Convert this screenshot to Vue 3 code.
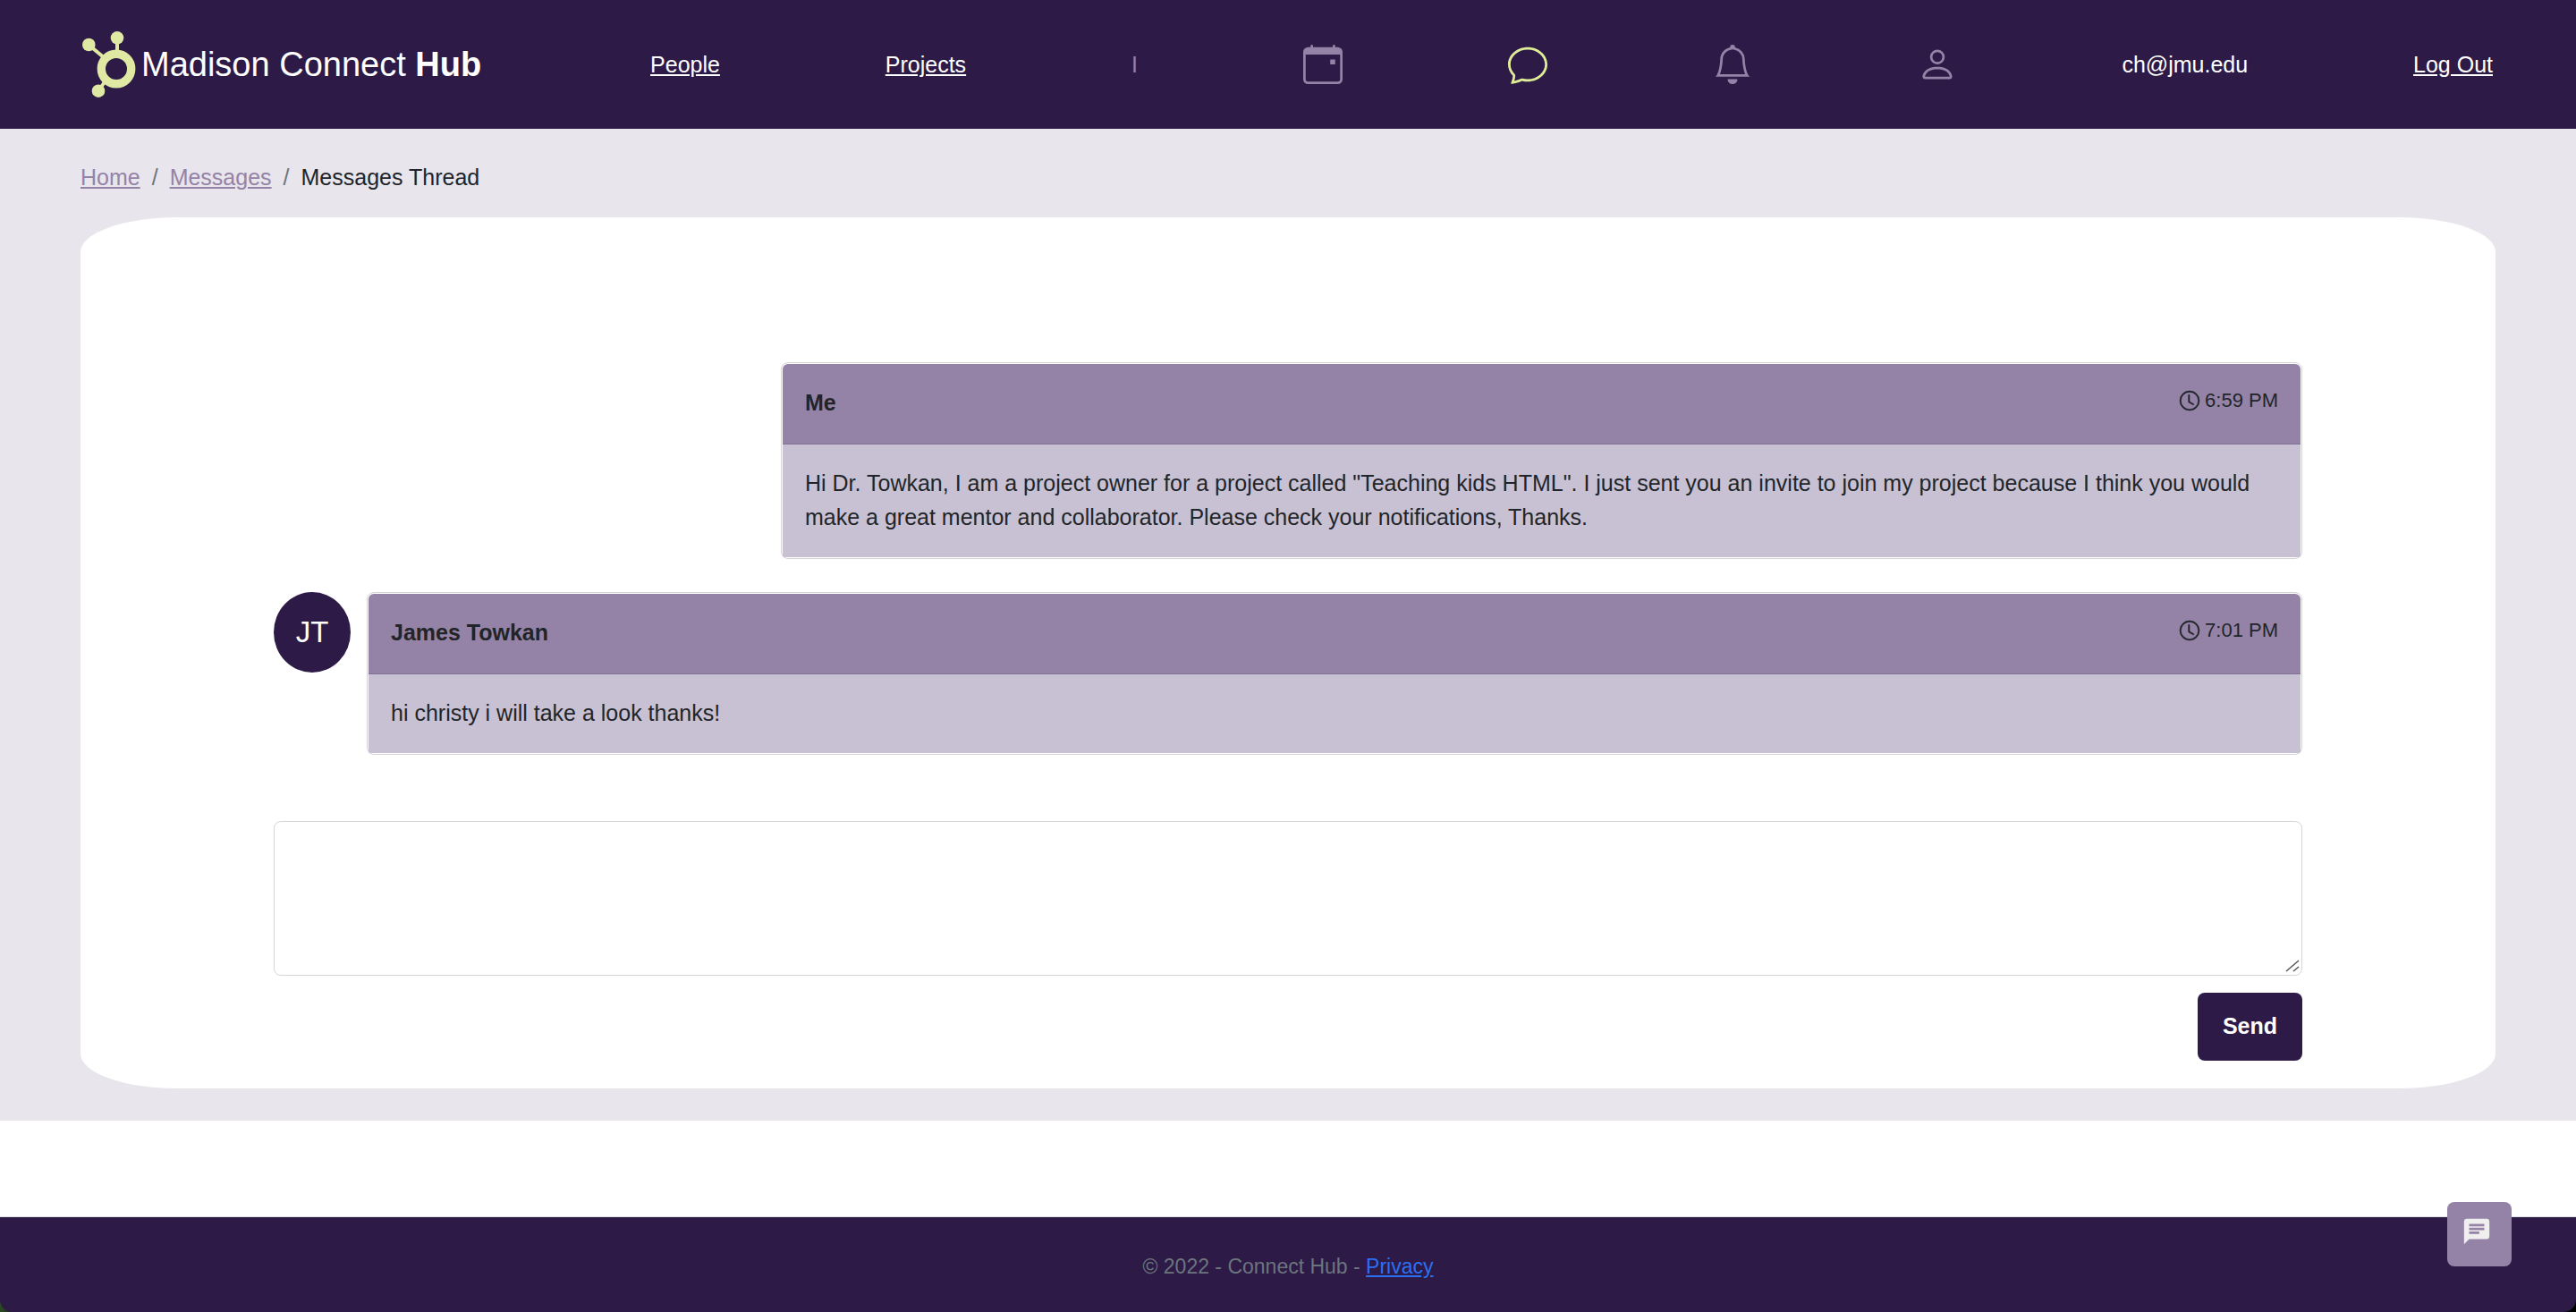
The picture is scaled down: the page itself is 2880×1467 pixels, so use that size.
<script setup>
import { ref } from 'vue'

const draft = ref('')

const icons = [
  {
    label: 'Calendar',
    paths: [
      'M11 6.500v1.500h2v-2h-2z',
      'M3.5 0a.5.5 0 0 1 .5.5V1h8V.5a.5.5 0 0 1 1 0V1h1a2 2 0 0 1 2 2v11a2 2 0 0 1-2 2H2a2 2 0 0 1-2-2V3a2 2 0 0 1 2-2h1V.5a.5.5 0 0 1 .5-.5zM1 4v10a1 1 0 0 0 1 1h12a1 1 0 0 0 1-1V4H1z'
    ]
  },
  {
    label: 'Messages',
    active: true,
    paths: [
      'M2.678 11.894a1 1 0 0 1 .287.801 10.97 10.97 0 0 1-.398 2c1.395-.323 2.247-.697 2.634-.893a1 1 0 0 1 .71-.074A8.06 8.06 0 0 0 8 14c3.996 0 7-2.807 7-6 0-3.192-3.004-6-7-6S1 4.808 1 8c0 1.468.617 2.83 1.678 3.894zm-.493 3.905a21.682 21.682 0 0 1-.713.129c-.2.032-.352-.176-.273-.362a9.68 9.68 0 0 0 .244-.637l.003-.01c.248-.72.45-1.548.524-2.319C.743 11.37 0 9.76 0 8c0-3.866 3.582-7 8-7s8 3.134 8 7-3.582 7-8 7a9.06 9.06 0 0 1-2.347-.306c-.52.263-1.639.742-3.468 1.105z'
    ]
  },
  {
    label: 'Notifications',
    paths: [
      'M8 16a2 2 0 0 0 2-2H6a2 2 0 0 0 2 2zM8 1.918l-.797.161A4.002 4.002 0 0 0 4 6c0 .628-.134 2.197-.459 3.742-.16.767-.376 1.566-.663 2.258h10.244c-.287-.692-.502-1.49-.663-2.258C12.134 8.197 12 6.628 12 6a4.002 4.002 0 0 0-3.203-3.92L8 1.917zM14.22 12c.223.447.481.801.78 1H1c.299-.199.557-.553.78-1C2.68 10.2 3 6.88 3 6c0-2.42 1.72-4.44 4.005-4.901a1 1 0 1 1 1.99 0A5.002 5.002 0 0 1 13 6c0 .88.32 4.2 1.22 6z'
    ]
  },
  {
    label: 'Profile',
    paths: [
      'M8 8a3 3 0 1 0 0-6 3 3 0 0 0 0 6zm2-3a2 2 0 1 1-4 0 2 2 0 0 1 4 0zm4 8c0 1-1 1-1 1H3s-1 0-1-1 1-4 6-4 6 3 6 4zm-1-.004c-.001-.246-.154-.986-.832-1.664C11.516 10.68 10.289 10 8 10c-2.29 0-3.516.68-4.168 1.332-.678.678-.83 1.418-.832 1.664h10z'
    ]
  }
]

const messages = [
  {
    name: 'Me',
    time: '6:59 PM',
    mine: true,
    text: 'Hi Dr. Towkan, I am a project owner for a project called "Teaching kids HTML". I just sent you an invite to join my project because I think you would make a great mentor and collaborator. Please check your notifications, Thanks.'
  },
  {
    name: 'James Towkan',
    initials: 'JT',
    time: '7:01 PM',
    mine: false,
    text: 'hi christy i will take a look thanks!'
  }
]
</script>

<template>
  <div class="page">
    <nav class="topbar">
      <a class="brand" href="#">
        <svg class="brand-mark" viewBox="92 34 60 76" aria-hidden="true">
          <g stroke="currentColor" fill="none">
            <path d="M131 42V60M99 50L117 65M110 102L118 90" stroke-width="4" />
            <circle cx="130" cy="77" r="16.7" stroke-width="9.4" />
          </g>
          <g fill="currentColor">
            <circle cx="131" cy="42.3" r="7.3" />
            <circle cx="99.3" cy="50" r="7.3" />
            <circle cx="110" cy="101.7" r="7.3" />
          </g>
        </svg>
        <span>Madison Connect <b>Hub</b></span>
      </a>
      <a href="#">People</a>
      <a href="#">Projects</a>
      <span class="divider">I</span>
      <a
        v-for="icon in icons"
        :key="icon.label"
        href="#"
        class="icon-link"
        :class="{ active: icon.active }"
        :aria-label="icon.label"
      >
        <svg viewBox="0 0 16 16" fill="currentColor" aria-hidden="true">
          <path v-for="d in icon.paths" :key="d" :d="d" />
        </svg>
      </a>
      <span>ch@jmu.edu</span>
      <a href="#">Log Out</a>
    </nav>

    <main>
      <ol class="breadcrumb" aria-label="breadcrumb">
        <li><a href="#">Home</a></li>
        <li><a href="#">Messages</a></li>
        <li>Messages Thread</li>
      </ol>

      <section class="panel">
        <div class="thread">
          <div
            v-for="m in messages"
            :key="m.name"
            class="row"
            :class="{ mine: m.mine }"
          >
            <div v-if="m.initials" class="avatar">{{ m.initials }}</div>
            <article class="card">
              <header>
                <strong>{{ m.name }}</strong>
                <span class="time">
                  <svg viewBox="0 0 16 16" fill="currentColor" aria-hidden="true">
                    <path d="M8 3.5a.5.5 0 0 0-1 0V9a.5.5 0 0 0 .252.434l3.5 2a.5.5 0 0 0 .496-.868L8 8.71V3.5z" />
                    <path d="M8 16A8 8 0 1 0 8 0a8 8 0 0 0 0 16zm7-8A7 7 0 1 1 1 8a7 7 0 0 1 14 0z" />
                  </svg>
                  {{ m.time }}
                </span>
              </header>
              <p>{{ m.text }}</p>
            </article>
          </div>
        </div>

        <form class="composer" @submit.prevent>
          <div class="field">
            <textarea v-model="draft" aria-label="Message"></textarea>
            <svg class="grip" viewBox="0 0 16 16" aria-hidden="true">
              <path d="M1 14L15 2M9 14L15 9" />
            </svg>
          </div>
          <button type="submit" class="send">Send</button>
        </form>
      </section>
    </main>

    <div class="footer-frame">
      <footer>
        <span>&copy; 2022 - Connect Hub - <a href="#">Privacy</a></span>
      </footer>
    </div>

    <button type="button" class="chat-toggle" aria-label="Open chat">
      <svg viewBox="0 0 24 24" fill="currentColor" aria-hidden="true">
        <path d="M20 2H4c-1.100 0-1.990.9-1.990 2L2 22l4-4h14c1.100 0 2-.9 2-2V4c0-1.100-.9-2-2-2zM6 9h12v2H6V9zm8 5H6v-2h8v2zm4-6H6V6h12v2z" />
      </svg>
    </button>
  </div>
</template>

<style>
body {
  margin: 0;
  background: #fff;
}
</style>

<style scoped>
.page {
  position: relative;
  display: flex;
  flex-direction: column;
  min-height: 100vh;
  font-family: "Liberation Sans", Arial, Helvetica, sans-serif;
  font-size: 25px;
  line-height: 38px;
  color: #212529;
}

.page *,
.page {
  box-sizing: border-box;
}

.topbar {
  display: flex;
  align-items: center;
  justify-content: space-between;
  height: 144px;
  padding: 0 93px 0 90px;
  background: #2d1a47;
  color: #fff;
}

.topbar a {
  color: #fff;
}

.topbar .brand {
  display: flex;
  align-items: center;
  gap: 6px;
  padding: 0 4px 0 2px;
  font-size: 38px;
  text-decoration: none;
}

.brand-mark {
  width: 60px;
  height: 76px;
  color: #e0e9a3;
}

.topbar .icon-link,
.divider {
  color: #9483a6;
}

.topbar .icon-link.active {
  color: #e0ed97;
}

.icon-link svg {
  display: block;
  width: 44px;
  height: 44px;
}

main {
  padding: 35px 90px 36px;
  background: #e8e5ec;
}

.breadcrumb {
  display: flex;
  margin: 0 0 26px;
  padding: 0;
  list-style: none;
}

.breadcrumb a {
  color: #9483a6;
}

.breadcrumb li + li::before {
  content: "/";
  padding: 0 13px;
  color: #6c757d;
}

.panel {
  padding: 162px 8% 31px;
  border-radius: 4%;
  background: #fff;
}

.thread {
  display: flex;
  flex-direction: column;
  gap: 37px;
}

.row {
  display: flex;
  align-items: flex-start;
  gap: 18px;
}

.row.mine {
  justify-content: flex-end;
}

.avatar {
  display: flex;
  flex: none;
  align-items: center;
  justify-content: center;
  width: 86px;
  height: 90px;
  border-radius: 50%;
  background: #2d1a47;
  color: #fff;
  font-size: 33px;
}

.card {
  flex: 1;
  padding: 1px;
  border: 1px solid #d4d3d6;
  border-radius: 8px;
  background: #fff;
}

.mine .card {
  flex: 0 0 75%;
}

.card header {
  display: flex;
  justify-content: space-between;
  align-items: flex-start;
  height: 90px;
  padding: 24px 25px;
  border-bottom: 1px solid #7f6f92;
  border-radius: 6px 6px 0 0;
  background: #9483a6;
}

.card p {
  margin: 0;
  padding: 24px 25px 26px;
  border-radius: 0 0 2px 2px;
  background: #c8c1d3;
}

.time {
  display: flex;
  align-items: center;
  gap: 6px;
  font-size: 22px;
  line-height: 34px;
}

.time svg {
  width: 22px;
  height: 22px;
  stroke: currentColor;
  stroke-width: 0.4;
  overflow: visible;
}

.composer {
  display: flex;
  flex-direction: column;
  align-items: flex-end;
  gap: 19px;
  margin-top: 74px;
}

.field {
  position: relative;
  width: 100%;
}

textarea {
  display: block;
  width: 100%;
  height: 173px;
  padding: 9px 19px;
  border: 1px solid #d3d6da;
  border-radius: 8px;
  background: #fff;
  font: inherit;
  resize: none;
}

.grip {
  position: absolute;
  right: 3px;
  bottom: 3px;
  width: 16px;
  height: 16px;
  fill: none;
  stroke: #555;
  stroke-width: 1.5;
  pointer-events: none;
}

.send {
  padding: 18px 28px 20px;
  border: 0;
  border-radius: 8px;
  background: #2d1a47;
  color: #fff;
  font: inherit;
  font-weight: 700;
}

.footer-frame {
  margin-top: auto;
  background: linear-gradient(90deg, #2c4a24, #000 40px);
}

footer {
  height: 107px;
  padding-top: 36px;
  border-top: 1px solid #dee2e6;
  border-radius: 0 0 14px 14px;
  background: #2d1a47;
  color: #6c757d;
  font-size: 23px;
  text-align: center;
}

footer a {
  color: #2a6ff4;
}

.chat-toggle {
  position: absolute;
  right: 72px;
  bottom: 51px;
  display: flex;
  align-items: flex-start;
  width: 72px;
  height: 72px;
  padding: 16px;
  border: 0;
  border-radius: 8px;
  background: #9483a6;
  color: #efefef;
}

.chat-toggle svg {
  width: 34px;
  height: 34px;
}
</style>
